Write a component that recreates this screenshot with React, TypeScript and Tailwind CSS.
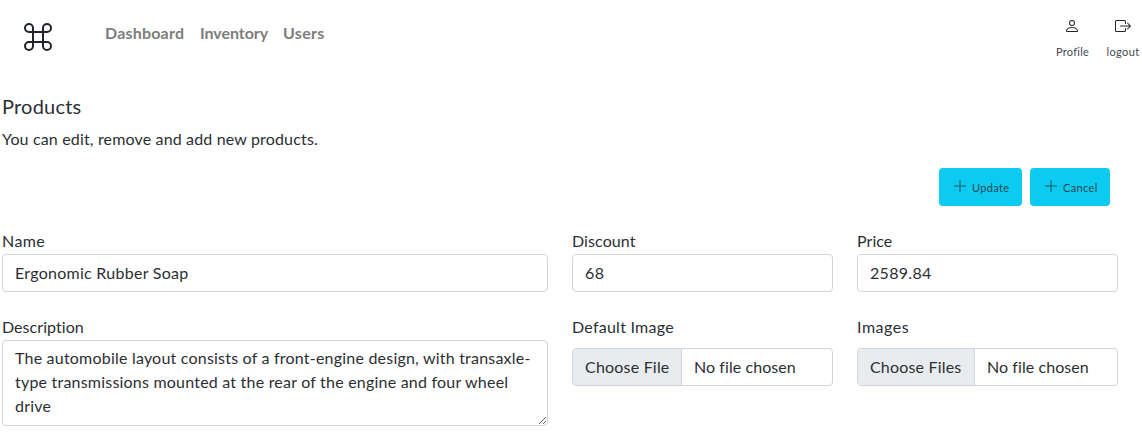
import type { ReactNode } from "react";
import { BsBoxArrowRight, BsCommand, BsPerson, BsPlusLg } from "react-icons/bs";

function Field({ label, labelClass, children }: { label: string; labelClass: string; children: ReactNode }) {
  return (
    <div className="flex flex-col">
      <span className={`h-6 leading-[22px] ${labelClass}`}>{label}</span>
      {children}
    </div>
  );
}

function TextInput({ value, className }: { value: string; className: string }) {
  return (
    <input
      type="text"
      defaultValue={value}
      className={`h-[38px] w-full rounded border border-[#ced4da] bg-white px-3 pt-[5px] pb-[7px] outline-none ${className}`}
    />
  );
}

function FileInput({ button, buttonClass }: { button: string; buttonClass: string }) {
  return (
    <div className="mt-2 flex h-[38px] overflow-hidden rounded border border-[#ced4da] bg-white leading-[35px]">
      <span className={`shrink-0 border-r border-[#ced4da] bg-[#e9ecef] pl-3 whitespace-nowrap ${buttonClass}`}>{button}</span>
      <span className="pl-3 tracking-[0.07px] whitespace-nowrap">No file chosen</span>
    </div>
  );
}

function ActionButton({ label, className }: { label: string; className: string }) {
  return (
    <button className={`flex h-[38px] items-center gap-1 rounded bg-[#0dcaf0] pl-[13px] text-[11px] tracking-[0.35px] ${className}`}>
      <BsPlusLg size={16} className="relative -top-px opacity-75" />
      <span className="pt-0.5 opacity-85">{label}</span>
    </button>
  );
}

export default function App() {
  return (
    <div className="h-[433px] overflow-hidden bg-white font-['Lato',sans-serif] text-base text-[#2b2f33]">
      <header className="flex h-[95px] items-start justify-between pr-[3px] pl-[22px]">
        <div className="flex items-start">
          <BsCommand size={32} className="mt-[21px] text-[#212529]" />
          <nav className="mt-[21px] ml-[51px] flex font-bold text-[#7d7d7d]">
            <a className="w-[95px] tracking-[0.2px]">Dashboard</a>
            <a className="w-[83px] tracking-[-0.05px]">Inventory</a>
            <a className="tracking-[0.3px]">Users</a>
          </nav>
        </div>
        <div className="flex gap-[18px] pt-[18px] text-[11px]">
          <div className="flex w-8 flex-col items-center gap-2.5">
            <BsPerson size={16} className="text-[#212529]" />
            <span className="pl-px tracking-[0.25px] text-[#45494d]">Profile</span>
          </div>
          <div className="flex w-[33px] flex-col items-center gap-2.5">
            <BsBoxArrowRight size={16} className="text-[#212529]" />
            <span className="pl-px tracking-[0.4px] text-[#45494d]">logout</span>
          </div>
        </div>
      </header>
      <main className="pr-6 pl-0.5">
        <h1 className="h-6 text-xl leading-[23px] tracking-[0.2px]">Products</h1>
        <p className="mt-2 mb-[17px] tracking-[0.16px]">You can edit, remove and add new products.</p>
        <div className="flex justify-end gap-2 pr-2">
          <ActionButton label="Update" className="w-[83px]" />
          <ActionButton label="Cancel" className="w-20" />
        </div>
        <div className="mt-6 grid grid-cols-[546px_261px_261px] gap-6">
          <Field label="Name" labelClass="tracking-[0.4px]">
            <TextInput value="Ergonomic Rubber Soap" className="tracking-[0.27px]" />
          </Field>
          <Field label="Discount" labelClass="tracking-[0.1px]">
            <TextInput value="68" className="tracking-[0.4px]" />
          </Field>
          <Field label="Price" labelClass="tracking-[0.05px]">
            <TextInput value="2589.84" className="tracking-[0.3px]" />
          </Field>
          <Field label="Description" labelClass="tracking-[0.05px]">
            <textarea
              className="h-[86px] w-full resize overflow-hidden rounded border border-[#ced4da] bg-white px-3 pt-[5px] tracking-[0.21px] outline-none"
              defaultValue={"The automobile layout consists of a front-engine design, with transaxle-type transmissions mounted at the rear of the engine and four wheel drive"}
            />
          </Field>
          <Field label="Default Image" labelClass="tracking-[0.25px]">
            <FileInput button="Choose File" buttonClass="w-[109px] tracking-[0.2px]" />
          </Field>
          <Field label="Images" labelClass="tracking-[0.55px]">
            <FileInput button="Choose Files" buttonClass="w-[117px] tracking-[0.18px]" />
          </Field>
        </div>
      </main>
    </div>
  );
}
